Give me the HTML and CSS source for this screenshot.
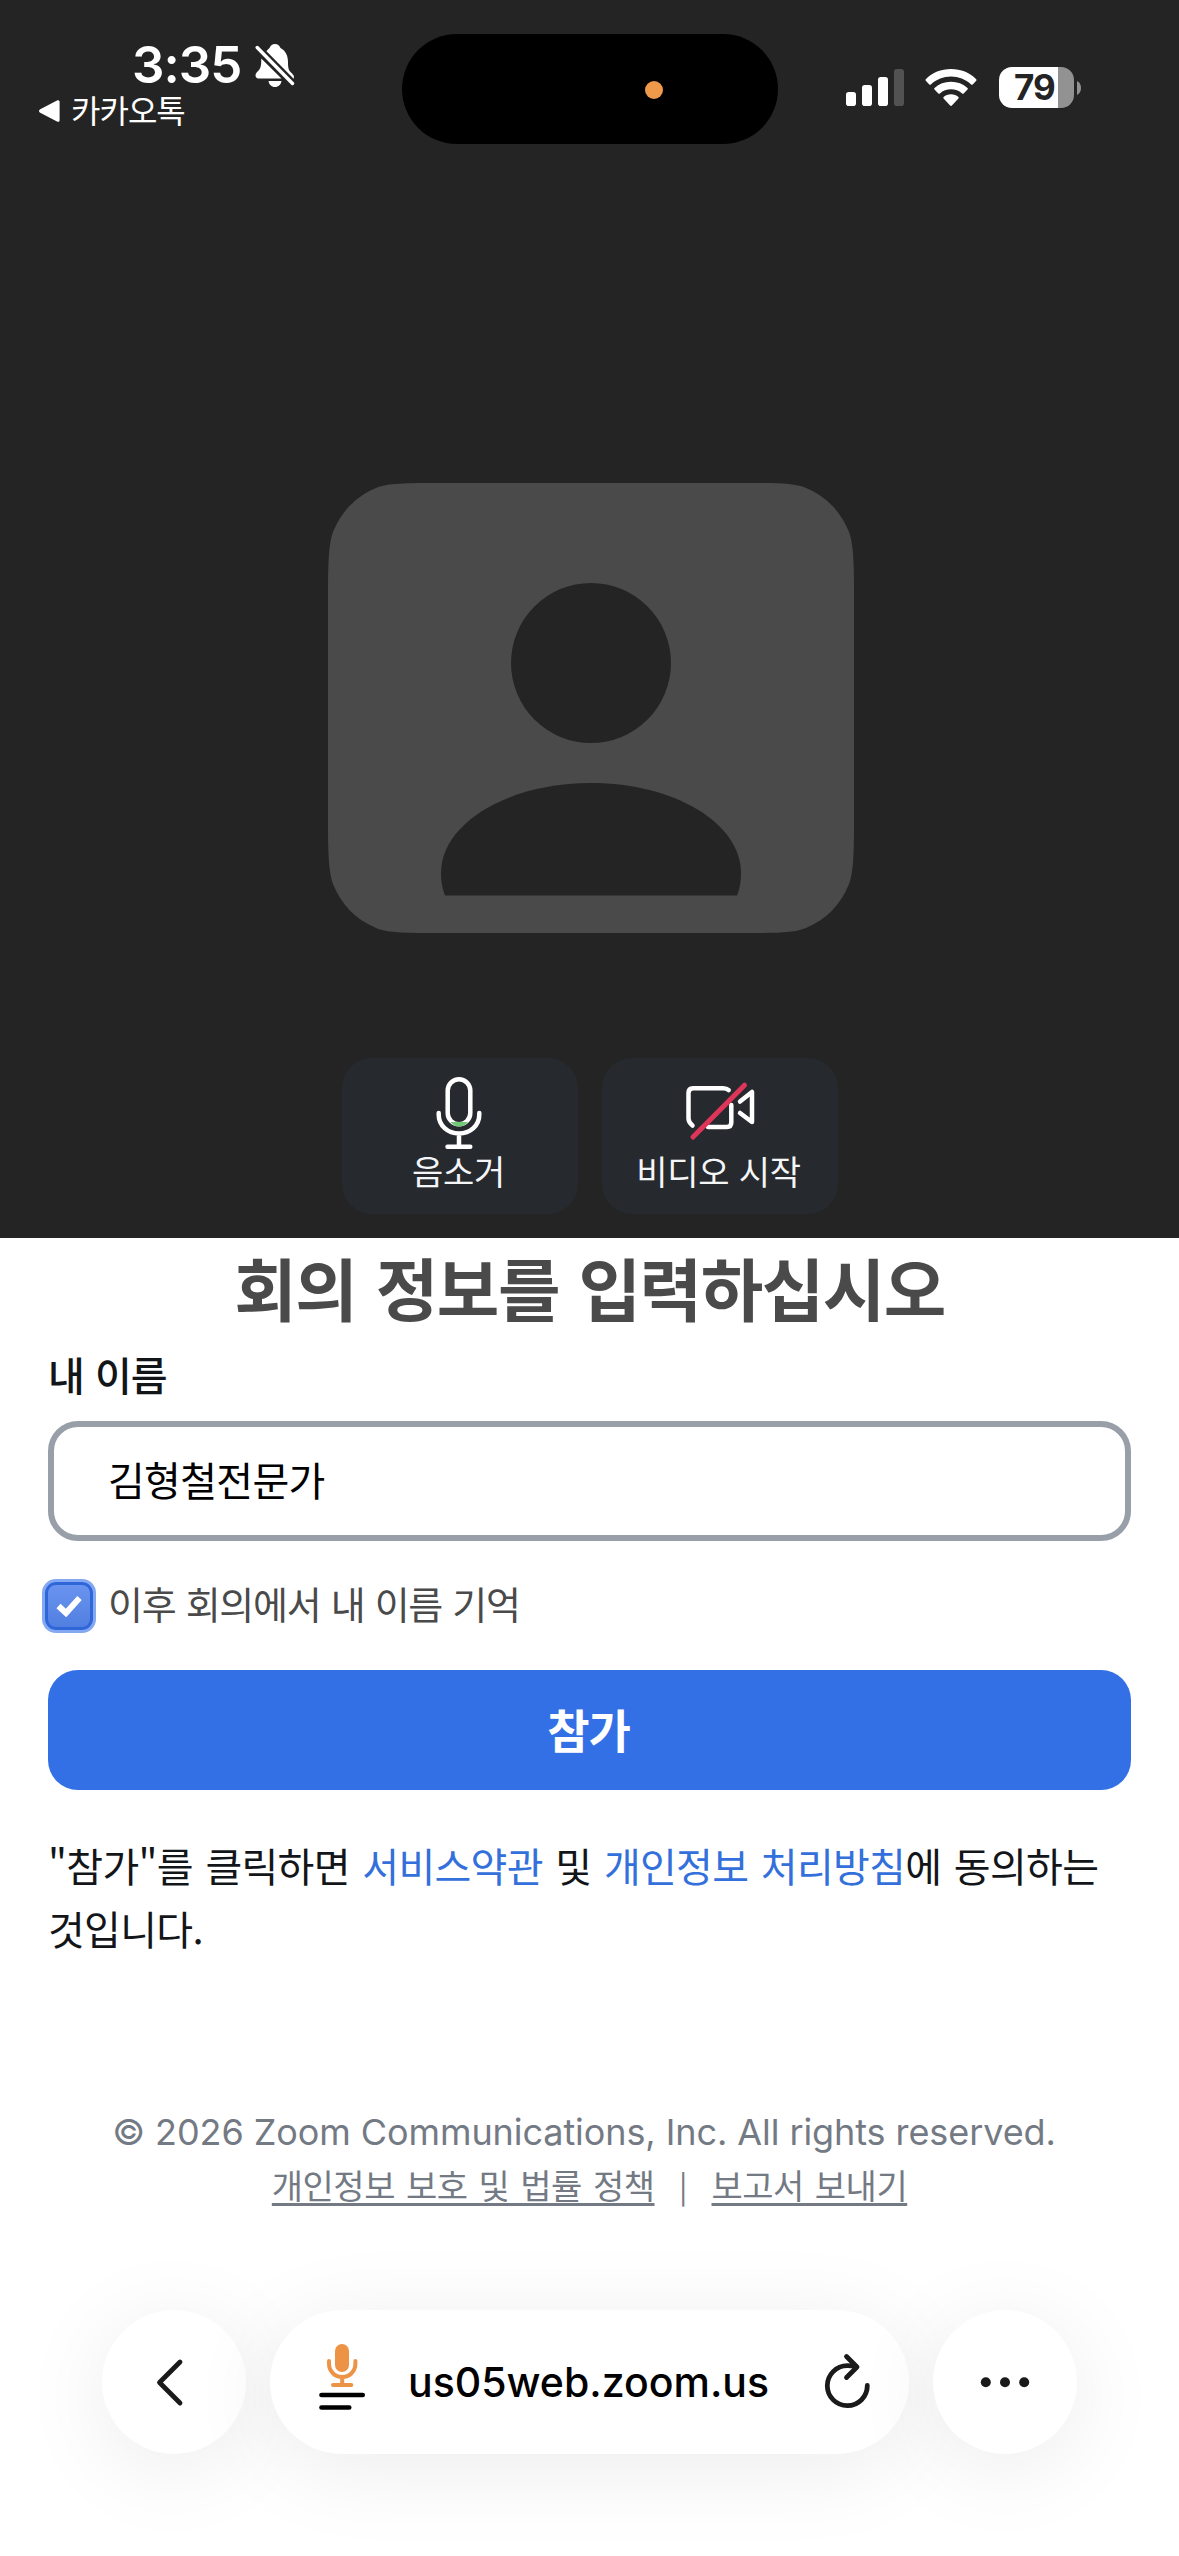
FILE: index.html
```html
<!DOCTYPE html>
<html lang="ko">
<head>
<meta charset="utf-8">
<title>Zoom</title>
<link rel="stylesheet" href="styles.css">
</head>
<body>
<div class="phone">
  <section class="preview">
    <header class="status">
      <div class="status-left">
        <div class="clock-row">
          <span class="clock">3:35</span>
          <svg class="bell" width="40" height="44" viewBox="0 0 40 44">
            <path fill="#fff" d="M11 7.500C12.500 6 13.500 5 14.500 4C15.500 1.500 17.500 0 20 0s4.500 1.500 5.500 4C31 7 33 12 33 18c0 6 .5 8 3 10.500 1.500 1.500 3 2.700 3 4.500L38.500 35z"/>
            <path fill="#fff" d="M6.300 14.500 26.500 34.500H3.500C1.500 34.500.5 33 .5 31.500c0-2.500 2-3.800 3.500-5.500 2-2.500 2.300-5.500 2.300-11.500zM13.500 37h13c-.5 3.500-3 6-6.500 6s-6-2.500-6.500-6z"/>
            <path stroke="#242424" stroke-width="8" d="M2.200 3.500 37.500 39.500"/>
            <path stroke="#fff" stroke-width="3.400" stroke-linecap="round" d="M2.200 3.500 37.500 39.500"/>
          </svg>
        </div>
        <div class="back-app">
          <svg width="21" height="22" viewBox="0 0 21 22"><path fill="#fff" d="M1.200 9.300 18 .5c1.600-.8 2.600 0 2.600 1.600v17.800c0 1.600-1 2.400-2.600 1.600L1.200 12.700c-1.600-.9-1.600-2.500 0-3.400z"/></svg>
          <span>카카오톡</span>
        </div>
      </div>
      <div class="island"><span class="island-dot"></span></div>
      <div class="status-right">
        <svg width="58" height="38" viewBox="0 0 58 38">
          <g fill="#fff"><rect y="23" width="10" height="14" rx="2.800"/><rect x="16" y="16" width="10" height="21" rx="2.800"/><rect x="32" y="8" width="10" height="29" rx="2.800"/></g>
          <rect x="48" width="10" height="37" rx="2.800" fill="#525252"/>
        </svg>
        <svg class="wifi" width="52" height="38" viewBox="0 0 52 38">
          <path fill="#fff" d="M.8 10.200C7.500 3.500 16 0 26 0s18.500 3.500 25.200 10.200c.5.500.5 1.100 0 1.600L47.700 15.400c-.5.500-1.100.5-1.600 0C40.500 10.300 33.500 7.500 26 7.500S11.500 10.300 5.900 15.400c-.5.500-1.100.5-1.600 0L.8 11.800c-.5-.5-.5-1.100 0-1.600z"/>
          <path fill="#fff" d="M9.500 19c4.500-4.200 10-6.300 16.500-6.300S38 14.800 42.500 19c.5.500.5 1.100 0 1.600L38.700 24.400c-.5.500-1.100.5-1.600 0C34 21.600 30.200 20.200 26 20.200s-8 1.400-11.100 4.200c-.5.500-1.100.5-1.600 0L9.500 20.600c-.5-.5-.5-1.100 0-1.600z"/>
          <path fill="#fff" d="M18.600 28C20.600 26.200 23 25.300 26 25.300s5.400.9 7.400 2.700c.5.500.5 1.100 0 1.600L26.900 36.600c-.5.600-1.200.6-1.800 0L18.600 29.600c-.5-.5-.5-1.100 0-1.600z"/>
        </svg>
        <div class="battery"><span class="battery-level">79</span></div>
        <svg class="battery-cap" width="4" height="14" viewBox="0 0 4 14"><path fill="#929292" d="M0 0c2.600 1.300 4 3.700 4 7s-1.400 5.700-4 7z"/></svg>
      </div>
    </header>
    <svg class="avatar" width="526" height="450" viewBox="0 0 526 450">
      <path fill="#4a4a4a" d="M0 110C0 76 1 60 5 49 13 29 27 14 48 5 60 0 78 0 112 0H414c34 0 52 0 64 5 21 9 35 24 43 44 4 11 5 27 5 61V340c0 34-1 50-5 61-8 20-22 35-43 44-12 5-30 5-64 5H112c-34 0-52 0-64-5-21-9-35-24-43-44-4-11-5-27-5-61z"/>
      <circle cx="263" cy="180" r="80" fill="#242424"/>
      <path fill="#242424" d="M117 412.500c-3-7-4-15-4-22.500 0-50 67-90 150-90s150 40 150 90c0 7.500-1 15.500-4 22.500z"/>
    </svg>
    <div class="controls">
      <button class="control">
        <svg width="236" height="94" viewBox="342 1058 236 94" fill="none" stroke="#fff" stroke-width="4.500" stroke-linecap="round">
          <rect x="447.700" y="1079.300" width="22.600" height="45" rx="11.300"/>
          <path stroke="none" fill="#70c976" d="M450.500 1122h17.500c-4.500 6-13 6-17.500 0z"/>
          <path d="M438.700 1113v1.500c0 11 9 19 20.300 19s20.300-8 20.300-19v-1.500M459 1134v12M447.500 1146.800h22.800"/>
        </svg>
        <span>음소거</span>
      </button>
      <button class="control">
        <svg width="236" height="94" viewBox="602 1058 236 94" fill="none" stroke="#fff" stroke-width="4.500" stroke-linecap="round" stroke-linejoin="round">
          <path d="M692.500 1125.500c-2.500-2-4-4-4-7V1093c0-3 1.500-4.800 4.500-4.800h30c3 0 4.500.8 5.700 2M731.300 1105v17.500c0 3-1.500 4.500-4.500 4.500H708M740 1101.500l12-9.500v30l-12-9"/>
          <path stroke="#de3558" stroke-width="5" d="M693 1137 744.500 1085.200"/>
        </svg>
        <span>비디오 시작</span>
      </button>
    </div>
  </section>

  <main class="join">
    <h1>회의 정보를 입력하십시오</h1>
    <label class="name-label" for="name">내 이름</label>
    <input class="name-input" id="name" type="text" value="김형철전문가">
    <div class="remember">
      <span class="check"><svg width="26" height="22" viewBox="0 0 26 22"><path fill="none" stroke="#fff" stroke-width="6" d="M2.500 11 10 18 23.500 3"/></svg></span>
      <span class="remember-text">이후 회의에서 내 이름 기억</span>
    </div>
    <button class="join-btn">참가</button>
    <p class="terms">"참가"를 클릭하면 <a>서비스약관</a> 및 <a>개인정보 처리방침</a>에 동의하는<br>것입니다.</p>
    <footer class="legal">
      <p class="copyright">© 2026 Zoom Communications, Inc. All rights reserved.</p>
      <p class="links"><a>개인정보 보호 및 법률 정책</a><span class="bar">|</span><a>보고서 보내기</a></p>
    </footer>
  </main>

  <nav class="browser-bar">
    <div class="round">
      <svg width="144" height="144" viewBox="102 2310 144 144"><path fill="none" stroke="#1a1a1a" stroke-width="4.800" stroke-linecap="round" stroke-linejoin="round" d="M180 2362 159.500 2382.500 180 2403"/></svg>
    </div>
    <div class="address">
      <svg class="mic-page" width="48" height="68" viewBox="318 2343 48 68" fill="none" stroke-linecap="round">
        <rect x="335" y="2344" width="14" height="28" rx="7" fill="#ed9345"/>
        <path stroke="#ed9345" stroke-width="4" d="M329 2361v2.500c0 8 6 13.500 13.200 13.500s13.200-5.500 13.200-13.500V2361M342.200 2377v8M333 2385h18.300"/>
        <path stroke="#000" stroke-width="4.700" d="M321.500 2395H362.700M321.500 2407.500h27.700"/>
      </svg>
      <span class="url">us05web.zoom.us</span>
      <svg class="reload" width="48" height="58" viewBox="823 2352 48 58" fill="none" stroke="#1a1a1a" stroke-width="4.800" stroke-linecap="round" stroke-linejoin="round">
        <path d="M867.300 2384.500A20 20 0 1 1 847.300 2364.700Q852 2364.700 856 2366"/><path d="M846.500 2355.500 857 2366 846.500 2376.500"/>
      </svg>
    </div>
    <div class="round">
      <svg width="144" height="144" viewBox="933 2310 144 144" fill="#1a1a1a"><circle cx="985.800" cy="2382.300" r="5"/><circle cx="1005" cy="2382.300" r="5"/><circle cx="1024.200" cy="2382.300" r="5"/></svg>
    </div>
  </nav>
</div>
</body>
</html>
```

FILE: styles.css
```css
* { box-sizing: border-box; }
body {
  margin: 0;
  background: #fff;
  font-family: "Noto Sans CJK KR", sans-serif;
  color: #131619;
}
h1, p { margin: 0; }
button { border: 0; padding: 0; font-family: inherit; }
svg { display: block; flex: none; }

.phone {
  width: 1179px;
  height: 2556px;
  display: flex;
  flex-direction: column;
  overflow: hidden;
}

.preview {
  height: 1238px;
  background: #242424;
  display: flex;
  flex-direction: column;
  align-items: center;
}
.status {
  width: 100%;
  height: 160px;
  display: flex;
  flex: none;
}
.status-left { width: 402px; padding: 40px 0 0 39px; }
.clock-row { display: flex; height: 50px; padding-left: 93px; }
.clock {
  width: 123px;
  font: 600 51px/50px Inter, sans-serif;
  letter-spacing: -1px;
  color: #fff;
}
.bell { margin-top: 4px; }
.back-app {
  display: flex;
  align-items: center;
  gap: 11px;
  height: 42px;
  color: #fff;
  font-size: 32px;
  line-height: 36px;
  letter-spacing: -1px;
}
.back-app span { padding-bottom: 5px; }
.island {
  width: 376px;
  height: 110px;
  margin-top: 34px;
  border-radius: 55px;
  background: #000;
  display: flex;
  align-items: center;
  padding-left: 243px;
}
.island-dot { width: 18px; height: 18px; border-radius: 50%; background: #ef9a4a; margin-top: 1px; }
.status-right { display: flex; padding: 69px 0 0 68px; }
.wifi { margin-left: 21px; }
.battery {
  width: 75px;
  height: 41px;
  margin: -2px 3px 0 22px;
  border-radius: 13px;
  background: linear-gradient(90deg, #fff 59px, #929292 59px);
  padding-left: 15px;
}
.battery-level {
  font: 700 35px/41px Inter, sans-serif;
  letter-spacing: -1px;
  color: #242424;
}
.battery-cap { margin-top: 12px; }

.avatar { margin: 323px 0 125px 3px; }
.controls { display: flex; gap: 24px; }
.control {
  width: 236px;
  height: 156px;
  border-radius: 30px;
  background: #26292e;
  color: #f4f5f7;
  font-size: 34px;
  line-height: 40px;
  letter-spacing: -0.2px;
  display: flex;
  flex-direction: column;
  align-items: center;
}
.control span { margin: -1px 2px 0 0; }

.join {
  padding: 0 48px;
  height: 1072px;
  display: flex;
  flex-direction: column;
}
h1 {
  height: 104px;
  font-size: 68px;
  line-height: 97px;
  font-weight: 700;
  letter-spacing: -1.5px;
  word-spacing: 2px;
  text-align: center;
  color: #4a4a4a;
}
.name-label {
  height: 79px;
  line-height: 64px;
  font-size: 40px;
  font-weight: 500;
  letter-spacing: -1px;
  word-spacing: 1px;
}
.name-input {
  width: 100%;
  height: 120px;
  border: 6px solid #989fa9;
  border-radius: 30px;
  background: #fff;
  padding: 0 54px 5px;
  font-family: inherit;
  font-size: 40px;
  letter-spacing: -0.7px;
  color: #000;
}
.remember {
  display: flex;
  align-items: center;
  height: 54px;
  margin: 38px 0 37px -6px;
}
.check {
  width: 54px;
  height: 54px;
  border: 3px solid #84a8f1;
  border-radius: 14px;
  background: linear-gradient(#6c95f0, #4f7ee0);
  box-shadow: inset 0 0 0 3px #2f66d8;
  display: flex;
  align-items: center;
  justify-content: center;
}
.remember-text {
  margin-left: 12px;
  padding-bottom: 6px;
  font-size: 38px;
  line-height: 48px;
  letter-spacing: -1.3px;
  word-spacing: 1px;
  color: #4a4a4a;
}
.join-btn {
  height: 120px;
  border-radius: 30px;
  background: #3370e6;
  color: #fff;
  font-size: 46px;
  font-weight: 700;
  letter-spacing: -1px;
  padding: 0 2px 5px 0;
}
.terms {
  margin-top: 44px;
  font-size: 40px;
  line-height: 63px;
  letter-spacing: -0.7px;
  word-spacing: 2px;
  white-space: nowrap;
}
.terms a { color: #3370db; }
.legal {
  margin-top: 146px;
  color: #747a84;
  text-align: center;
}
.copyright {
  font: 400 36px/52px Inter, sans-serif;
  letter-spacing: -0.08px;
  padding-right: 11px;
}
.links {
  display: flex;
  justify-content: center;
  font-size: 34px;
  line-height: 54px;
  letter-spacing: -0.5px;
  word-spacing: 2px;
}
.links a { text-decoration: underline; text-decoration-thickness: 3px; text-underline-offset: 4px; }
.bar { width: 57px; text-align: center; font-size: 31px; }

.browser-bar { display: flex; justify-content: center; gap: 24px; }
.round, .address {
  height: 144px;
  border-radius: 72px;
  background: #fff;
  box-shadow: 0 14px 90px rgba(0, 0, 0, 0.08);
}
.round { width: 144px; }
.address {
  width: 639px;
  display: flex;
  align-items: center;
  padding-left: 48px;
}
.mic-page { margin-bottom: 10px; }
.url {
  width: 415px;
  margin-left: 42px;
  font: 500 41px/60px Inter, sans-serif;
  letter-spacing: 0;
  color: #000;
}
```
